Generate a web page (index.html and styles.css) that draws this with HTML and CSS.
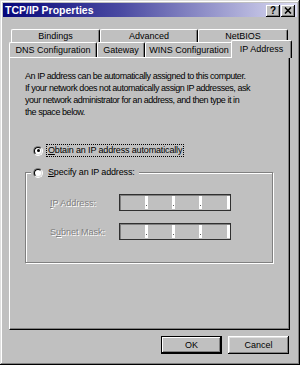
FILE: index.html
```html
<!DOCTYPE html>
<html>
<head>
<meta charset="utf-8">
<link rel="stylesheet" href="styles.css">
</head>
<body>
<div class="window">
  <div class="titlebar">
    <span class="title">TCP/IP Properties</span>
    <div class="tbtns">
      <span class="tbtn help">?</span>
      <span class="tbtn close"><svg width="8" height="7" viewBox="0 0 8 7"><path d="M1 0.5 L7 6.5 M7 0.5 L1 6.5" stroke="#000" stroke-width="1.6"/></svg></span>
    </div>
  </div>
  <div class="body">
    <div class="tabs">
      <div class="row back">
        <div class="tab t-bind">Bindings</div>
        <div class="tab t-adv">Advanced</div>
        <div class="tab t-nb">NetBIOS</div>
      </div>
      <div class="row front">
        <div class="tab t-dns">DNS Configuration</div>
        <div class="tab t-gw">Gateway</div>
        <div class="tab t-wins">WINS Configuration</div>
        <div class="tab t-ip selected">IP Address</div>
      </div>
    </div>
    <div class="panel">
      <p class="intro">An IP address can be automatically assigned to this computer.<br>If your network does not automatically assign IP addresses, ask<br>your network administrator for an address, and then type it in<br>the space below.</p>
      <div class="radio-row obtain">
        <span class="radio"><span class="radio-in"><span class="dot"></span></span></span>
        <span class="rlabel focus"><u>O</u>btain an IP address automatically</span>
      </div>
      <div class="group">
        <div class="legend">
          <span class="radio"><span class="radio-in"></span></span>
          <span class="rlabel"><u>S</u>pecify an IP address:</span>
        </div>
        <div class="field-row first">
          <span class="lbl"><u>I</u>P Address:</span>
          <div class="ipbox">
            <span class="seg"></span><span class="sep"><i></i></span>
            <span class="seg"></span><span class="sep"><i></i></span>
            <span class="seg"></span><span class="sep"><i></i></span>
            <span class="seg"></span><span class="sep end"></span>
          </div>
        </div>
        <div class="field-row">
          <span class="lbl">S<u>u</u>bnet Mask:</span>
          <div class="ipbox">
            <span class="seg"></span><span class="sep"><i></i></span>
            <span class="seg"></span><span class="sep"><i></i></span>
            <span class="seg"></span><span class="sep"><i></i></span>
            <span class="seg"></span><span class="sep end"></span>
          </div>
        </div>
      </div>
    </div>
    <div class="buttons">
      <button class="btn default">OK</button>
      <button class="btn">Cancel</button>
    </div>
  </div>
</div>
</body>
</html>
```
FILE: styles.css
```css
* { box-sizing: border-box; }
html, body { margin: 0; padding: 0; background: #c0c0c0; }
body { font-family: "Liberation Sans", Arial, sans-serif; font-size: 9px; color: #000; }

.window {
  width: 300px;
  height: 365px;
  padding: 3px;
  background: #c0c0c0;
  box-shadow: inset -1px -1px 0 #000, inset 1px 1px 0 #dfdfdf, inset -2px -2px 0 #808080, inset 2px 2px 0 #fff;
}

.titlebar {
  height: 14px;
  display: flex;
  align-items: flex-start;
  justify-content: space-between;
  background: linear-gradient(to right, #06067a 0%, #4a4aa2 40%, #dcdcf2 100%);
  padding-left: 2px;
}
.title {
  color: #fff;
  font-weight: bold;
  font-size: 10.5px;
  line-height: 14px;
}
.tbtns { display: flex; gap: 1px; margin-top: 2px; margin-right: 2px; }
.tbtn {
  width: 14px;
  height: 12px;
  background: #c0c0c0;
  box-shadow: inset -1px -1px 0 #000, inset 1px 1px 0 #fff, inset -2px -2px 0 #808080;
  display: flex;
  align-items: center;
  justify-content: center;
  font-weight: bold;
  font-size: 10px;
  line-height: 12px;
}
.tbtn.help { padding-bottom: 1px; }
.tbtn svg { display: block; margin-bottom: 1px; }

.body { padding-left: 6px; width: 287px; }
.tabs { margin-top: 12px; width: 281px; }
.row { display: flex; }
.row.back { height: 13px; margin: 0 2px; }
.row.front { height: 15px; }

.tab {
  background: #c0c0c0;
  border-top: 1px solid #fff;
  border-left: 1px solid #fff;
  border-right: 1px solid #000;
  border-radius: 2px 2px 0 0;
  box-shadow: inset -1px 0 0 #808080;
  display: flex;
  align-items: center;
  justify-content: center;
  white-space: nowrap;
}
.row.back .tab { padding-bottom: 1px; }
.t-bind { width: 89px; }
.t-adv { width: 98px; }
.t-nb { width: 90px; }
.t-dns { width: 88px; }
.t-gw { width: 48px; }
.t-wins { width: 88px; }
.t-ip { width: 61px; }
.tab.selected {
  height: 18px;
  margin: -2px -2px -1px -2px;
  position: relative;
  z-index: 2;
  padding-bottom: 2px;
}

.panel {
  width: 281px;
  height: 273px;
  border-top: 1px solid #fff;
  border-left: 1px solid #fff;
  border-right: 1px solid #000;
  border-bottom: 1px solid #000;
  box-shadow: inset -1px -1px 0 #808080;
  padding: 12px 0 0 15px;
  position: relative;
  z-index: 1;
}
.intro { margin: 0; line-height: 12px; white-space: nowrap; letter-spacing: -0.45px; }

.radio-row, .legend { display: flex; align-items: center; height: 13px; }
.obtain { margin-top: 26px; padding-left: 8px; }
.radio {
  width: 10px;
  height: 10px;
  border-radius: 50%;
  border: 1px solid;
  border-color: #808080 #fff #fff #808080;
  flex: none;
}
.radio-in {
  display: flex;
  align-items: center;
  justify-content: center;
  width: 8px;
  height: 8px;
  border-radius: 50%;
  border: 1px solid;
  border-color: #000 #dfdfdf #dfdfdf #000;
  background: #fff;
}
.dot { width: 3px; height: 3px; border-radius: 50%; background: #000; }
.rlabel { margin-left: 3px; padding: 0 1px; line-height: 11px; border: 1px solid transparent; white-space: nowrap; letter-spacing: -0.15px; }
.rlabel.focus { border: 1px dotted #000; }

.group {
  margin-top: 15px;
  width: 248px;
  height: 91px;
  border: 1px solid #808080;
  box-shadow: 1px 1px 0 #fff, inset 1px 1px 0 #fff;
}
.legend {
  width: max-content;
  margin: -7px 0 0 5px;
  padding: 0 2px;
  background: #c0c0c0;
}
.field-row { display: flex; align-items: center; padding-left: 24px; height: 17px; margin-top: 12px; }
.field-row.first { margin-top: 15px; }
.lbl { width: 69px; color: #808080; text-shadow: 1px 1px 0 #fff; white-space: nowrap; }

.ipbox {
  width: 112px;
  height: 17px;
  display: flex;
  border: 1px solid #303030;
  box-shadow: inset 1px 1px 0 #808080;
  background: #c0c0c0;
  padding: 1px 0 1px 1px;
}
.seg { width: 24px; height: 100%; }
.sep {
  width: 3px;
  height: 100%;
  background: #fff;
  display: flex;
  align-items: flex-end;
  justify-content: center;
  padding-bottom: 3px;
}
.sep i { display: block; width: 1px; height: 1px; background: #606060; }
.sep.end { width: 3px; margin-left: auto; }

.buttons { display: flex; justify-content: flex-end; gap: 6px; margin-top: 6px; width: 280px; }
.btn {
  width: 61px;
  height: 18px;
  font-family: "Liberation Sans", Arial, sans-serif;
  font-size: 9px;
  color: #000;
  background: #c0c0c0;
  border: none;
  padding: 0;
  box-shadow: inset -1px -1px 0 #000, inset 1px 1px 0 #fff, inset -2px -2px 0 #808080, inset 2px 2px 0 #dfdfdf;
}
.btn.default {
  box-shadow: inset 0 0 0 1px #000, inset -2px -2px 0 #000, inset 2px 2px 0 #fff, inset -3px -3px 0 #808080;
}
```
